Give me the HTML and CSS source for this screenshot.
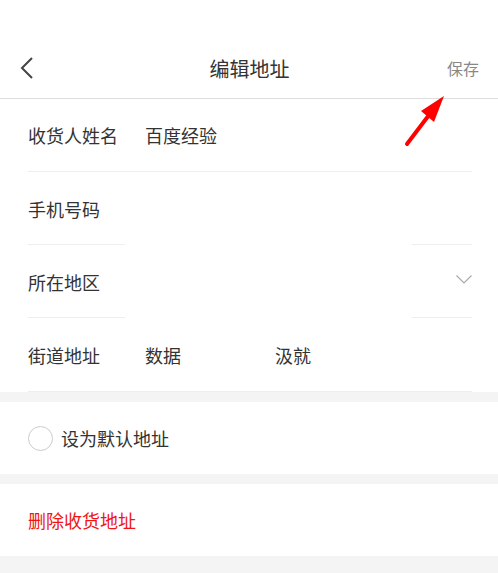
FILE: index.html
```html
<!DOCTYPE html>
<html lang="zh-CN">
<head>
  <meta charset="UTF-8" />
  <meta name="viewport" content="width=device-width, initial-scale=1.0"/>
  <title>编辑地址</title>
  <link rel="stylesheet" href="styles.css">
</head>
<body>

  <div class="page">

    <!-- NAV BAR -->
    <div class="navbar">
      <span class="back">
        <svg width="14" height="22" viewBox="0 0 14 22"><path d="M12 1 L2 11 L12 21" fill="none" stroke="#444" stroke-width="2"/></svg>
      </span>
      <div class="title">编辑地址</div>
      <span class="save">保存</span>
    </div>

    <!-- ADDRESS FORM -->
    <div class="form">
      <div class="row">
        <span class="label">收货人姓名</span>
        <span class="value">百度经验</span>
      </div>
      <div class="row cut">
        <span class="label">手机号码</span>
      </div>
      <div class="row cut">
        <span class="label">所在地区</span>
        <span class="arrow">
          <svg width="16" height="9" viewBox="0 0 16 9"><path d="M0.5 0.5 L8 8 L15.5 0.5" fill="none" stroke="#aaa" stroke-width="1.2"/></svg>
        </span>
      </div>
      <div class="row">
        <span class="label">街道地址</span>
        <span class="value">数据</span>
        <span class="value extra">汲就</span>
      </div>
    </div>

    <div class="block">
      <span class="radio"></span>
      <span class="default-text">设为默认地址</span>
    </div>

    <div class="block">
      <span class="delete">删除收货地址</span>
    </div>

    <!-- pointer to the save button -->
    <svg class="pointer" width="60" height="60" viewBox="0 0 60 60">
      <path d="M6 53 L28 24" stroke="#f00" stroke-width="4" stroke-linecap="round"/>
      <path d="M43 5 L20 20 L33 31 Z" fill="#f00"/>
    </svg>

  </div>

</body>
</html>
```

FILE: styles.css
```css
* { margin: 0; padding: 0; box-sizing: border-box; }
body {
  font-family: "Noto Sans CJK SC", "Noto Sans", sans-serif;
  background: #f4f4f4;
  color: #333;
}
.page {
  position: relative;
  width: 498px;
  min-height: 573px;
}
.navbar {
  background: #fff;
  height: 99px;
  padding-top: 38px;
  border-bottom: 1px solid #ddd;
  display: flex;
  align-items: center;
  justify-content: space-between;
  padding-left: 20px;
  padding-right: 19px;
}
.back {
  display: flex;
  width: 60px;
}
.title {
  font-size: 20px;
  color: #333;
}
.save {
  font-size: 16px;
  color: #888;
  width: 60px;
  text-align: right;
}
.form {
  background: #fff;
}
.row {
  height: 73px;
  margin: 0 26px 0 28px;
  border-bottom: 1px solid #eee;
  display: flex;
  align-items: center;
  font-size: 18px;
}
.row:last-child {
  height: 74px;
}
.row.cut {
  border-bottom: none;
  background: linear-gradient(#eee, #eee) left bottom / 97px 1px no-repeat,
              linear-gradient(#eee, #eee) right bottom / 60px 1px no-repeat;
}
.label {
  width: 117px;
  color: #333;
}
.value {
  color: #333;
}
.value.extra {
  margin-left: 94px;
}
.arrow {
  margin-left: auto;
  display: flex;
  margin-top: -4px;
}
.block {
  background: #fff;
  height: 72px;
  margin-top: 10px;
  display: flex;
  align-items: center;
  padding-left: 28px;
  font-size: 18px;
}
.radio {
  width: 25px;
  height: 25px;
  border: 1px solid #ccc;
  border-radius: 50%;
  margin-right: 8px;
}
.default-text {
  color: #333;
}
.delete {
  color: #f01414;
}
.pointer {
  position: absolute;
  left: 401px;
  top: 91px;
}
```
